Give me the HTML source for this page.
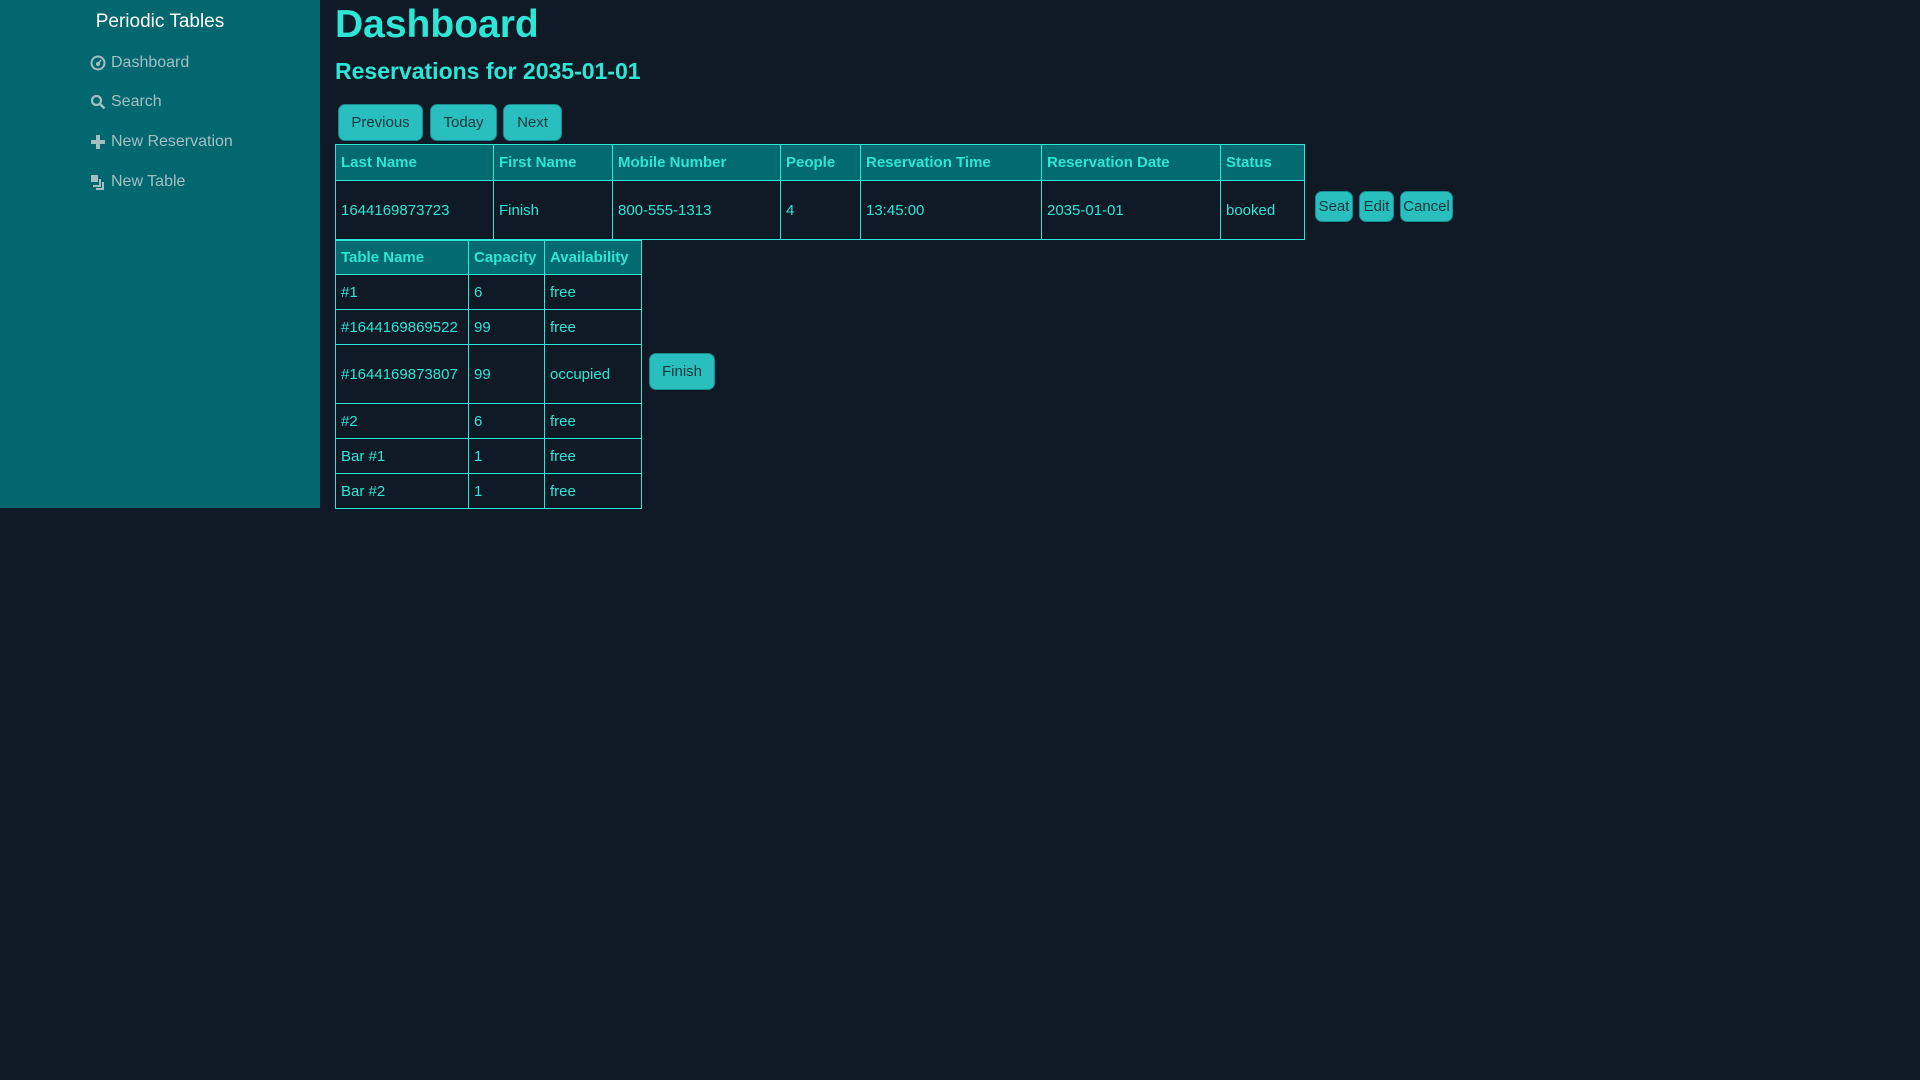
<!DOCTYPE html>
<html><head><meta charset="utf-8"><style>
*{box-sizing:border-box;margin:0;padding:0}
body{width:1920px;height:1080px;background:#101a26;font-family:"Liberation Sans",sans-serif;color:#2ee6d6;position:relative;overflow:hidden}
.side{position:absolute;left:0;top:0;width:320px;height:508px;background:#02676f}
.brand{position:absolute;left:0;width:320px;top:11px;text-align:center;color:#fff;font-size:19px}
.nav{position:absolute;left:90px;color:#a3bfc2;font-size:16px;display:flex;align-items:center;gap:5px}
.nav svg{width:16px;height:16px}
h1{position:absolute;left:335px;top:3px;font-size:39px;font-weight:bold;color:#2ee6d6;letter-spacing:0}
h2{position:absolute;left:335px;top:58px;font-size:23px;font-weight:bold;color:#2ee6d6}
.btn{position:absolute;background:#2abfbf;color:#16393d;border:1px solid #1a8a8e;border-radius:7px;font-size:15px;display:flex;align-items:center;justify-content:center}
table{position:absolute;border-collapse:collapse;font-size:15px;table-layout:fixed}
td,th{border:1px solid #2ee6d6;text-align:left;padding:0 5px;white-space:nowrap;overflow:hidden}
th{background:#046a72;font-weight:bold}
</style></head><body>
<div class="side">
<div class="brand">Periodic Tables</div>
<div class="nav" style="top:54px"><svg viewBox="0 0 16 16"><circle cx="8" cy="8" r="6.5" fill="none" stroke="#a3bfc2" stroke-width="2"/><circle cx="8" cy="9" r="2" fill="#a3bfc2"/><path d="M8 9L11 5" stroke="#a3bfc2" stroke-width="1.5"/></svg>Dashboard</div>
<div class="nav" style="top:93px"><svg viewBox="0 0 16 16"><circle cx="6.5" cy="6.5" r="4.5" fill="none" stroke="#a3bfc2" stroke-width="2.2"/><path d="M10 10L14.5 14.5" stroke="#a3bfc2" stroke-width="2.5"/></svg> Search</div>
<div class="nav" style="top:133px"><svg viewBox="0 0 16 16"><path d="M8 1V15M1 8H15" stroke="#a3bfc2" stroke-width="4"/></svg>New Reservation</div>
<div class="nav" style="top:173px"><svg viewBox="0 0 16 16"><rect x="1" y="1" width="7" height="7" fill="#a3bfc2"/><path d="M10 5V12H3M13 8V15H6" stroke="#a3bfc2" stroke-width="2" fill="none"/></svg>New Table</div>
</div>
<h1>Dashboard</h1>
<h2>Reservations for 2035-01-01</h2>
<div class="btn" style="left:338px;top:104px;width:85px;height:37px">Previous</div>
<div class="btn" style="left:430px;top:104px;width:67px;height:37px">Today</div>
<div class="btn" style="left:503px;top:104px;width:59px;height:37px">Next</div>
<table style="left:335px;top:144px;width:969px">
<colgroup><col style="width:158px"><col style="width:119px"><col style="width:168px"><col style="width:80px"><col style="width:181px"><col style="width:179px"><col style="width:84px"></colgroup>
<tr style="height:36px"><th>Last Name</th><th>First Name</th><th>Mobile Number</th><th>People</th><th>Reservation Time</th><th>Reservation Date</th><th>Status</th></tr>
<tr style="height:59px"><td>1644169873723</td><td>Finish</td><td>800-555-1313</td><td>4</td><td>13:45:00</td><td>2035-01-01</td><td>booked</td></tr>
</table>
<div class="btn" style="left:1315px;top:191px;width:38px;height:31px">Seat</div>
<div class="btn" style="left:1359px;top:191px;width:35px;height:31px">Edit</div>
<div class="btn" style="left:1400px;top:191px;width:53px;height:31px">Cancel</div>
<table style="left:335px;top:240px;width:306px">
<colgroup><col style="width:133px"><col style="width:76px"><col style="width:97px"></colgroup>
<tr style="height:34px"><th>Table Name</th><th>Capacity</th><th>Availability</th></tr>
<tr style="height:35px"><td>#1</td><td>6</td><td>free</td></tr>
<tr style="height:35px"><td>#1644169869522</td><td>99</td><td>free</td></tr>
<tr style="height:59px"><td>#1644169873807</td><td>99</td><td>occupied</td></tr>
<tr style="height:35px"><td>#2</td><td>6</td><td>free</td></tr>
<tr style="height:35px"><td>Bar #1</td><td>1</td><td>free</td></tr>
<tr style="height:35px"><td>Bar #2</td><td>1</td><td>free</td></tr>
</table>
<div class="btn" style="left:649px;top:353px;width:66px;height:37px">Finish</div>
</body></html>
